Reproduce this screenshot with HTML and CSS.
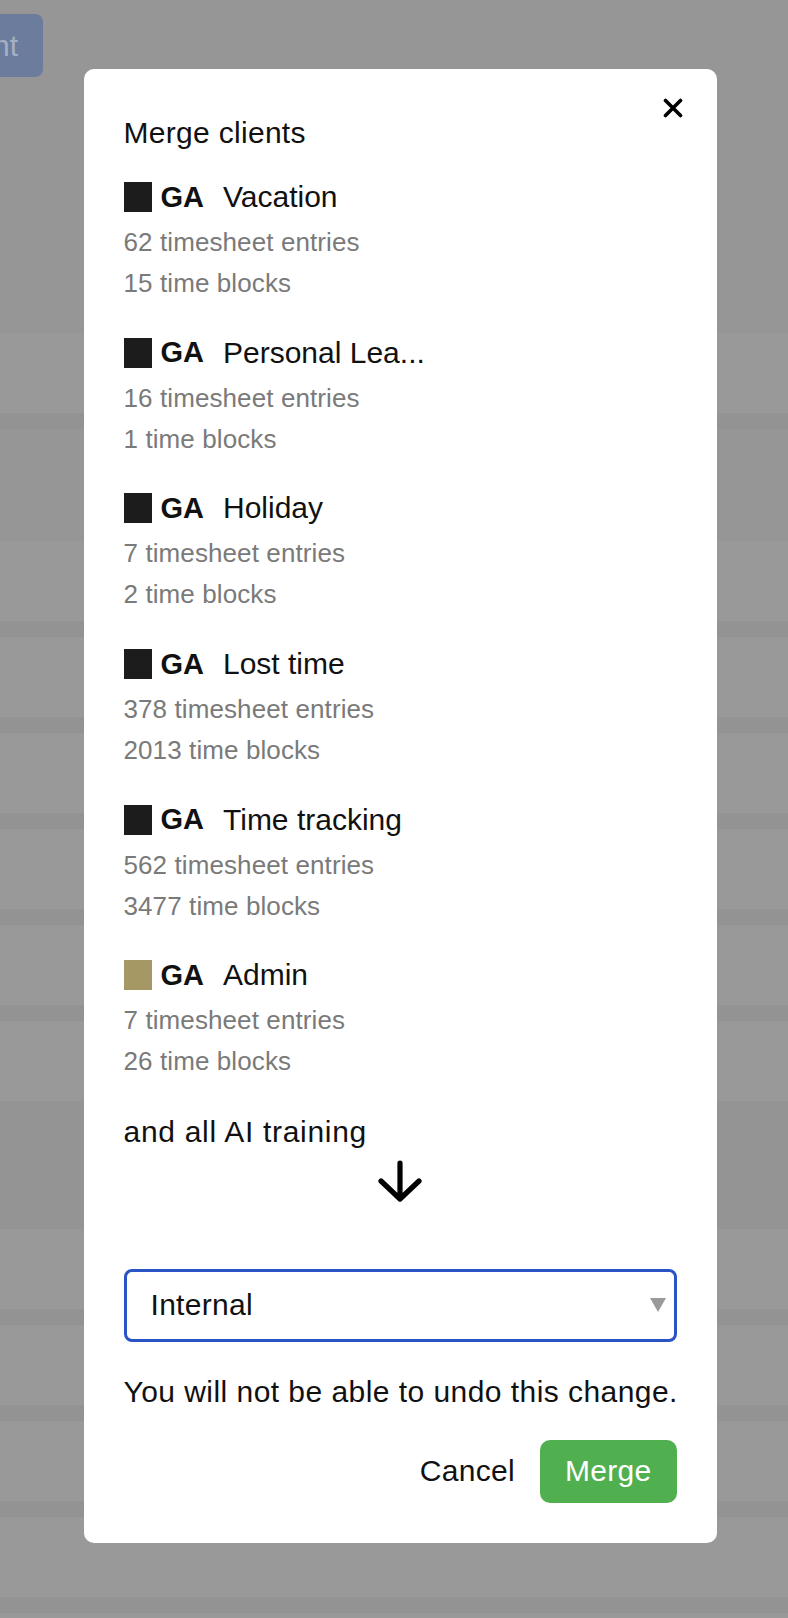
FILE: index.html
```html
<!DOCTYPE html>
<html lang="en">
<head>
<meta charset="utf-8">
<title>Merge clients</title>
<link rel="stylesheet" href="styles.css">
</head>
<body>
<div class="page">
  <div class="bg">
    <div class="bg-top">
      <div class="top-btn"><span>nt</span></div>
    </div>
    <div class="band light"></div>
    <div class="band sep"></div>
    <div class="band mid"></div>
    <div class="band light"></div>
    <div class="band sep"></div>
    <div class="band light"></div>
    <div class="band sep"></div>
    <div class="band light"></div>
    <div class="band sep"></div>
    <div class="band light"></div>
    <div class="band sep"></div>
    <div class="band light"></div>
    <div class="band sep"></div>
    <div class="band light"></div>
    <div class="band dark"></div>
    <div class="band light"></div>
    <div class="band sep"></div>
    <div class="band light"></div>
    <div class="band sep"></div>
    <div class="band light"></div>
    <div class="band sep"></div>
    <div class="band light"></div>
    <div class="band sep"></div>
    <div class="band light"></div>
  </div>

  <div class="modal">
    <button class="close" aria-label="Close">
      <svg width="20" height="20" viewBox="0 0 20 20"><path d="M2.5 2.5 L17.5 17.5 M17.5 2.5 L2.5 17.5" stroke="#000" stroke-width="3.6" stroke-linecap="round" fill="none"/></svg>
    </button>
    <h2 class="heading">Merge clients</h2>
    <div class="clients">
      <div class="client">
        <div class="client-name"><span class="swatch"></span><span class="code">GA</span><span>Vacation</span></div>
        <div class="stat">62 timesheet entries</div>
        <div class="stat">15 time blocks</div>
      </div>
      <div class="client">
        <div class="client-name"><span class="swatch"></span><span class="code">GA</span><span>Personal Lea...</span></div>
        <div class="stat">16 timesheet entries</div>
        <div class="stat">1 time blocks</div>
      </div>
      <div class="client">
        <div class="client-name"><span class="swatch"></span><span class="code">GA</span><span>Holiday</span></div>
        <div class="stat">7 timesheet entries</div>
        <div class="stat">2 time blocks</div>
      </div>
      <div class="client">
        <div class="client-name"><span class="swatch"></span><span class="code">GA</span><span>Lost time</span></div>
        <div class="stat">378 timesheet entries</div>
        <div class="stat">2013 time blocks</div>
      </div>
      <div class="client">
        <div class="client-name"><span class="swatch"></span><span class="code">GA</span><span>Time tracking</span></div>
        <div class="stat">562 timesheet entries</div>
        <div class="stat">3477 time blocks</div>
      </div>
      <div class="client">
        <div class="client-name"><span class="swatch swatch-gold"></span><span class="code">GA</span><span>Admin</span></div>
        <div class="stat">7 timesheet entries</div>
        <div class="stat">26 time blocks</div>
      </div>
    </div>
    <p class="note">and all AI training</p>
    <div class="arrow">
      <svg width="46" height="42" viewBox="0 0 46 42"><path d="M23 3 L23 39 M4 21 L23 39 L42 21" stroke="#000" stroke-width="5.2" stroke-linecap="round" stroke-linejoin="round" fill="none"/></svg>
    </div>
    <div class="select">
      <span>Internal</span>
      <span class="caret"></span>
    </div>
    <p class="warning">You will not be able to undo this change.</p>
    <div class="actions">
      <button class="btn-cancel">Cancel</button>
      <button class="btn-merge">Merge</button>
    </div>
  </div>
</div>
</body>
</html>
```
FILE: styles.css
```css
* { box-sizing: border-box; }

html, body {
  margin: 0;
  padding: 0;
}

body {
  background: #999999;
  font-family: "Liberation Sans", Arial, sans-serif;
  color: #111;
}

.page {
  position: relative;
  width: 788px;
  height: 1618px;
  overflow: hidden;
}

.bg {
  display: flex;
  flex-direction: column;
  width: 100%;
}

.bg-top {
  height: 333px;
  background: #969696;
  padding-top: 14px;
}

.top-btn {
  width: 43px;
  height: 63px;
  background: #6b7c9c;
  border-radius: 0 8px 8px 0;
  display: flex;
  align-items: center;
  justify-content: flex-end;
  padding-right: 25px;
  overflow: hidden;
  color: #a6b0c3;
  font-size: 30px;
  white-space: nowrap;
}

.band { flex: none; }
.band.light { height: 80px; background: #999999; }
.band.sep { height: 16px; background: #939393; }
.band.mid { height: 112px; background: #969696; }
.band.dark { height: 128px; background: #949494; }

.modal {
  position: absolute;
  left: 83.5px;
  top: 69px;
  width: 633px;
  padding: 44px 40px 40px;
  background: #fff;
  border-radius: 10px;
  letter-spacing: 0.3px;
}

.close {
  position: absolute;
  top: 29px;
  right: 34px;
  width: 20px;
  height: 20px;
  padding: 0;
  border: 0;
  background: none;
  display: block;
}
.close svg { display: block; }

.heading {
  margin: 0 0 24px;
  font-size: 30px;
  line-height: 40px;
  font-weight: normal;
}

.clients {
  display: flex;
  flex-direction: column;
  gap: 28.7px;
}

.client-name {
  display: flex;
  align-items: center;
  height: 40px;
  margin-bottom: 5px;
  font-size: 30px;
  white-space: nowrap;
  letter-spacing: 0;
}

.swatch {
  width: 28px;
  height: 30px;
  background: #1c1c1c;
  margin-right: 9px;
  flex: none;
}
.swatch-gold { background: #a69865; }

.code {
  font-weight: bold;
  font-size: 29px;
  margin-right: 19px;
}

.stat {
  font-size: 26px;
  line-height: 41px;
  color: #7a7a7a;
  letter-spacing: 0.1px;
}

.note {
  margin: 29.5px 0 0;
  font-size: 30px;
  line-height: 40px;
  letter-spacing: 0.7px;
}

.arrow {
  display: flex;
  justify-content: center;
  margin-top: 8px;
}
.arrow svg { display: block; }

.select {
  margin-top: 67px;
  height: 73px;
  border: 3px solid #2a53c6;
  border-radius: 8px;
  display: flex;
  align-items: center;
  justify-content: space-between;
  padding: 0 8px 0 24px;
  font-size: 30px;
  color: #111;
}

.caret {
  width: 0;
  height: 0;
  border-left: 8px solid transparent;
  border-right: 8px solid transparent;
  border-top: 14px solid #9a9a9a;
}

.warning {
  margin: 30px 0 0;
  font-size: 30px;
  line-height: 40px;
  white-space: nowrap;
  letter-spacing: 0.45px;
}

.actions {
  margin-top: 28px;
  display: flex;
  justify-content: flex-end;
  align-items: center;
  gap: 25px;
}

.actions button {
  font-family: "Liberation Sans", Arial, sans-serif;
  font-size: 30px;
  border: 0;
  margin: 0;
  letter-spacing: 0.3px;
}

.btn-cancel {
  background: none;
  padding: 0;
  color: #111;
}

.btn-merge {
  height: 63px;
  padding: 0 25px;
  background: #50b050;
  color: #fff;
  border-radius: 10px;
}
```
